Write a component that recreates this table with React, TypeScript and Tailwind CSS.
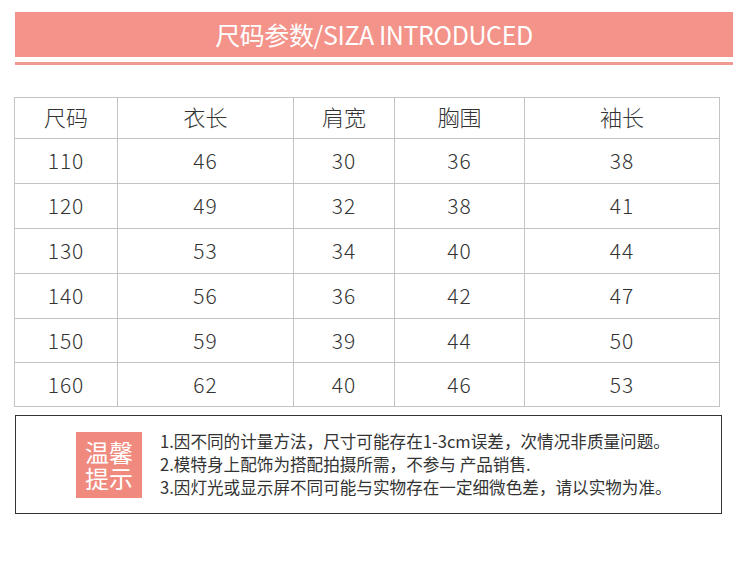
const cols = ["尺码", "衣长", "肩宽", "胸围", "袖长"];

const rows = [
  ["110", "46", "30", "36", "38"],
  ["120", "49", "32", "38", "41"],
  ["130", "53", "34", "40", "44"],
  ["140", "56", "36", "42", "47"],
  ["150", "59", "39", "44", "50"],
  ["160", "62", "40", "46", "53"],
];

const rowHeights = ["h-[45px]", "h-[45px]", "h-[45px]", "h-[45px]", "h-[44px]", "h-[44px]"];

const notes = [
  "1.因不同的计量方法，尺寸可能存在1-3cm误差，次情况非质量问题。",
  "2.模特身上配饰为搭配拍摄所需，不参与 产品销售.",
  "3.因灯光或显示屏不同可能与实物存在一定细微色差，请以实物为准。",
];

export default function App() {
  return (
    <div
      className="w-[750px] h-[568px] bg-white overflow-hidden"
      style={{ fontFamily: '"Noto Sans CJK SC", "Noto Sans", sans-serif' }}
    >
      <div className="pt-[12px] pl-[15px]">
        <div className="w-[718px] h-[45px] bg-[#f3938a] flex items-center justify-center">
          <span className="text-white text-[25px] leading-none tracking-[-0.4px]">尺码参数/SIZA INTRODUCED</span>
        </div>
        <div className="w-[718px] h-[3px] mt-[5px] bg-[#f09990]" />
      </div>

      <div className="ml-[14px] mt-[32px] w-[706px] border-r border-b border-[#c4c4c4] grid grid-cols-[103px_176px_101px_130px_195px] text-[#333] font-light">
        {cols.map((c) => (
          <div key={c} className="h-[41px] border-l border-t border-[#c4c4c4] flex items-center justify-center text-[22px] pb-[3px]">
            {c}
          </div>
        ))}
        {rows.map((r, i) =>
          r.map((v, j) => (
            <div
              key={i + "-" + j}
              className={`${rowHeights[i]} border-l border-t border-[#c4c4c4] flex items-center justify-center text-[21px] tracking-[1px]`}
            >
              {v}
            </div>
          ))
        )}
      </div>

      <div className="ml-[15px] mt-[8px] w-[707px] h-[99px] border-[1.5px] border-[#333] flex items-center">
        <div className="ml-[60px] w-[66px] h-[66px] bg-[#f08a7e] flex items-center justify-center">
          <p className="text-white text-[24px] leading-[26px] text-center">
            温馨
            <br />
            提示
          </p>
        </div>
        <div className="ml-[18px] flex flex-col text-[16.6px] leading-[23px] text-[#333]">
          {notes.map((n) => (
            <div key={n}>{n}</div>
          ))}
        </div>
      </div>
    </div>
  );
}
